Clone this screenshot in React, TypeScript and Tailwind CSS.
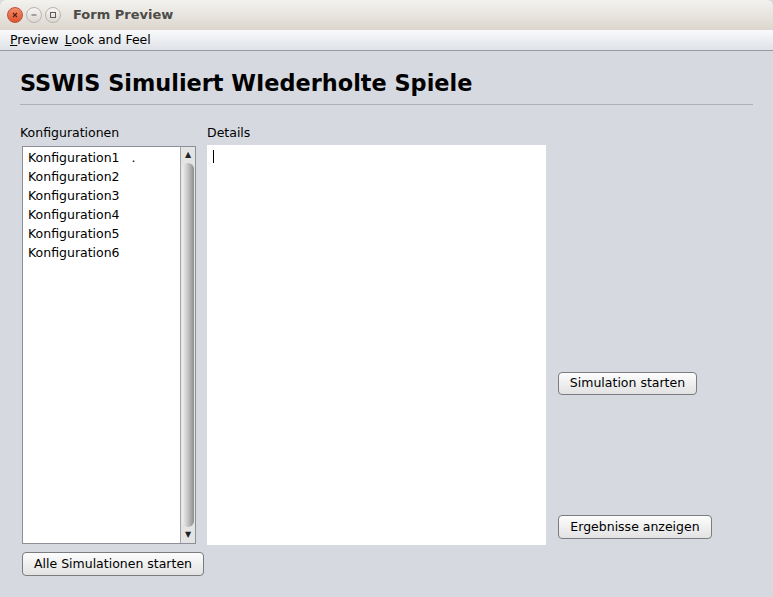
const font = { fontFamily: '"DejaVu Sans", "Liberation Sans", sans-serif' };

function WinButton({ kind }: { kind: 'close' | 'min' | 'max' }) {
  if (kind === 'close') {
    return (
      <div className="flex h-[16px] w-[16px] items-center justify-center rounded-full border border-[#b8533a] bg-gradient-to-b from-[#f58a6a] to-[#e0532c]">
        <svg width="8" height="8" viewBox="0 0 8 8">
          <path d="M2 2 L6 6 M6 2 L2 6" stroke="#5a2412" strokeWidth="1.3" />
        </svg>
      </div>
    );
  }
  return (
    <div className="flex h-[16px] w-[16px] items-center justify-center rounded-full border border-[#b7b3ad] bg-gradient-to-b from-[#f7f6f4] to-[#dcd8d2]">
      <svg width="8" height="8" viewBox="0 0 8 8">
        {kind === 'min' ? (
          <path d="M1.5 4 H6.5" stroke="#5c5c5c" strokeWidth="1" />
        ) : (
          <rect x="1.5" y="1.5" width="5" height="5" fill="none" stroke="#5c5c5c" strokeWidth="1" />
        )}
      </svg>
    </div>
  );
}

function Button({ label, className }: { label: string; className: string }) {
  return (
    <div
      className={`flex items-center justify-center rounded-[4px] border border-[#7a7c80] bg-gradient-to-b from-[#fdfdfd] to-[#e2e2e2] text-[12.5px] text-black ${className}`}
    >
      {label}
    </div>
  );
}

export default function App() {
  const configs = ['Konfiguration1', 'Konfiguration2', 'Konfiguration3', 'Konfiguration4', 'Konfiguration5', 'Konfiguration6'];

  return (
    <div className="flex h-[597px] w-[773px] flex-col overflow-hidden bg-[#d6d9df]" style={font}>
      {/* title bar */}
      <div className="flex h-[30px] items-center rounded-t-[6px] bg-gradient-to-b from-[#f3f2ef] to-[#dcd6ce] pl-[7px]">
        <div className="flex gap-[3px]">
          <WinButton kind="close" />
          <WinButton kind="min" />
          <WinButton kind="max" />
        </div>
        <span className="ml-[12px] text-[13px] font-bold text-[#4d4b48]">Form Preview</span>
      </div>

      {/* menu bar */}
      <div className="flex h-[21px] items-center gap-[6px] border-b border-[#979a9f] bg-gradient-to-b from-[#f9fafb] to-[#dfe2e7] pl-[10px] text-[12.5px] text-black">
        <span>
          <span className="underline">P</span>review
        </span>
        <span>
          <span className="underline">L</span>ook and Feel
        </span>
      </div>

      <div className="flex flex-col px-[20px]">
        <h1 className="mt-[19px] h-[26px] text-[22.4px] font-bold leading-[26px] text-black">
          SSWIS Simuliert WIederholte Spiele
        </h1>
        <div className="mt-[8px] h-px bg-[#aeb1b7]" />

        <div className="mt-[20px] flex">
          {/* left column */}
          <div className="flex w-[184px] flex-col">
            <span className="h-[16px] text-[12.5px] leading-[16px] text-black">Konfigurationen</span>
            <div className="ml-[2px] mt-[5px] flex h-[398px] w-[174px] border border-[#8d9096] bg-white">
              <div className="flex flex-1 flex-col pl-[5px] pt-[1px]">
                {configs.map((c, i) => (
                  <div key={c} className="h-[19px] text-[12.5px] leading-[19px] text-black">
                    {c}
                    {i === 0 && <span className="ml-[12px]">.</span>}
                  </div>
                ))}
              </div>
              <div className="flex w-[15px] flex-col border-l border-[#a3a5a9] bg-[#e4e4e4]">
                <div className="flex h-[16px] items-center justify-center text-[8px] leading-none text-[#222]">▲</div>
                <div className="mx-px flex-1 rounded-b-[8px] rounded-t-[8px] bg-gradient-to-r from-[#f2f2f2] via-[#c4c4c4] to-[#8e8e8e]" />
                <div className="flex h-[16px] items-center justify-center text-[8px] leading-none text-[#222]">▼</div>
              </div>
            </div>
            <Button label="Alle Simulationen starten" className="ml-[2px] mt-[8px] h-[24px] w-[182px]" />
          </div>

          {/* details column */}
          <div className="ml-[3px] flex flex-col">
            <span className="h-[16px] text-[12.5px] leading-[16px] text-black">Details</span>
            <div className="mt-[4px] h-[400px] w-[339px] bg-white pl-[6px] pt-[5px]">
              <div className="h-[13px] w-px bg-black" />
            </div>
          </div>

          {/* right column */}
          <div className="ml-[12px] flex flex-col">
            <Button label="Simulation starten" className="mt-[247px] h-[23px] w-[139px]" />
            <Button label="Ergebnisse anzeigen" className="mt-[120px] h-[24px] w-[154px]" />
          </div>
        </div>
      </div>
    </div>
  );
}
